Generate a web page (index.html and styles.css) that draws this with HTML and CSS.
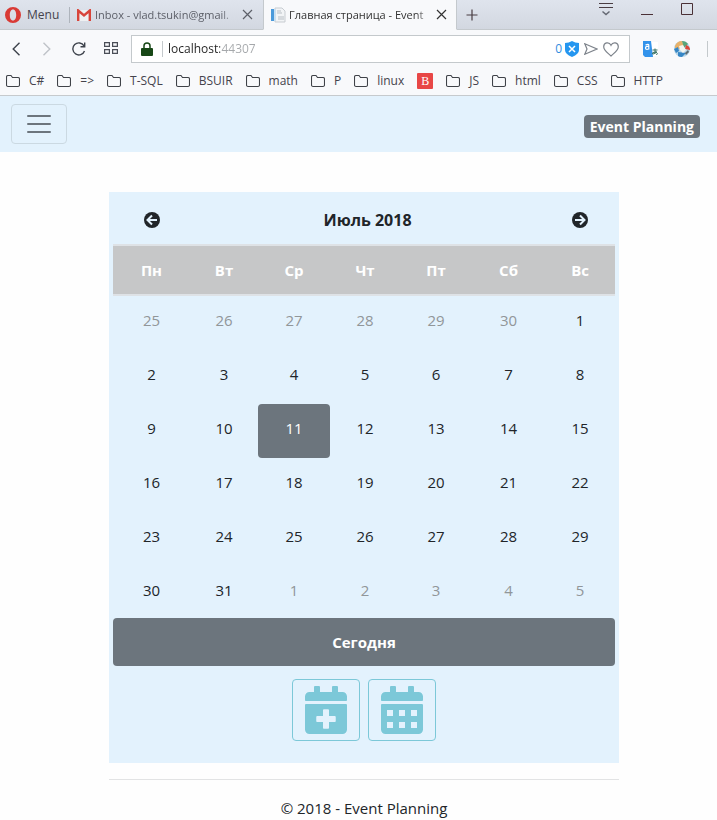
FILE: index.html
```html
<!DOCTYPE html>
<html lang="ru">
<head>
<meta charset="utf-8">
<meta name="viewport" content="width=device-width, initial-scale=1">
<title>Главная страница - Event Planning</title>
<link rel="stylesheet" href="styles.css">
</head>
<body>
<svg width="0" height="0" class="defs" aria-hidden="true">
  <symbol id="folder" viewBox="0 0 14 14"><path d="M.5 3Q.5 1.500 2 1.500H5L6.500 3.500H12Q13.500 3.500 13.500 5V11Q13.500 12.500 12 12.500H2Q.5 12.500.5 11Z" fill="none" stroke="#3f4248" stroke-width="1.100"/></symbol>
  <symbol id="cross" viewBox="0 0 11 11"><path d="M1 1L10 10M10 1L1 10" fill="none" stroke="currentColor" stroke-width="1.200"/></symbol>
</svg>

<header class="browser">
  <div class="tabs">
    <button class="menu" type="button">
      <svg width="16" height="16" viewBox="0 0 16 16"><path fill="#d93a35" fill-rule="evenodd" d="M8 0A8 8 0 1 1 8 16A8 8 0 1 1 8 0ZM8 2.500C5.800 2.500 4.800 5 4.800 8S5.800 13.500 8 13.500S11.200 11 11.200 8S10.200 2.500 8 2.500Z"/></svg>
      Menu
    </button>
    <div class="tab">
      <svg width="14" height="12" viewBox="0 0 14 12"><path d="M0 1H14V12H0Z" fill="#eef0f2"/><path d="M1.200 12V1.500L7 6.500L12.800 1.500V12" fill="none" stroke="#d8453b" stroke-width="2.400"/></svg>
      <span class="tab-title">Inbox - vlad.tsukin@gmail.</span>
      <button class="close" type="button" aria-label="Close tab"><svg width="11" height="11"><use href="#cross"/></svg></button>
    </div>
    <div class="tab active">
      <svg width="16" height="16" viewBox="0 0 16 16"><path d="M5 1H12L15 4V15H5Z" fill="#f2f4f6" stroke="#c7ccd1"/><path d="M1 2H4V14H1Z" fill="#4a9adb"/><path d="M4 2H6V14H4Z" fill="#c9dff0"/><path d="M7 4H11M7 6H12M8 10H14M8 12H14" stroke="#b9bfc5"/></svg>
      <span class="tab-title">Главная страница - Event</span>
      <button class="close" type="button" aria-label="Close tab"><svg width="11" height="11"><use href="#cross"/></svg></button>
    </div>
    <button class="new-tab" type="button" aria-label="New tab"><svg width="12" height="12" viewBox="0 0 12 12"><path d="M6 .5V11.500M.5 6H11.500" stroke="#483c42" stroke-width="1.200"/></svg></button>
    <div class="window-buttons">
      <button type="button" aria-label="Tab menu"><svg width="14" height="13" viewBox="0 0 14 13"><path d="M0 .5H14M0 4.500H14" stroke="#4a3d42"/><path d="M3.500 8.500L7 11.500L10.500 8.500" fill="none" stroke="#646872" stroke-width="1.500"/></svg></button>
      <button type="button" aria-label="Minimize"><svg width="12" height="12" viewBox="0 0 12 12"><path d="M0 11.500H12" stroke="#4a3036"/></svg></button>
      <button type="button" aria-label="Maximize"><svg width="12" height="12" viewBox="0 0 12 12"><path d="M.5.5H11.500V11.500H.5Z" fill="none" stroke="#4a3036"/></svg></button>
    </div>
  </div>

  <div class="toolbar">
    <div class="nav-buttons">
      <button type="button" aria-label="Back"><svg width="8" height="14" viewBox="0 0 8 14"><path d="M7.500.7L1.200 7L7.500 13.300" fill="none" stroke="#3e434c" stroke-width="1.400"/></svg></button>
      <button type="button" aria-label="Forward"><svg width="8" height="14" viewBox="0 0 8 14"><path d="M.5.7L6.800 7L.5 13.300" fill="none" stroke="#bfc3c8" stroke-width="1.400"/></svg></button>
      <button type="button" aria-label="Reload"><svg width="14" height="14" viewBox="0 0 14 14"><path d="M12.500 9A6 6 0 1 1 12 3.800M12.700.5V4.700H8.500" fill="none" stroke="#3e434c" stroke-width="1.400"/></svg></button>
      <button type="button" aria-label="Speed dial"><svg width="14" height="12" viewBox="0 0 14 12"><path d="M.6.6H5.400V4.400H.6ZM8.600.6H13.400V4.400H8.600ZM.6 7.600H5.400V11.400H.6ZM8.600 7.600H13.400V11.400H8.600Z" fill="none" stroke="#4a4e57" stroke-width="1.200"/></svg></button>
    </div>
    <div class="address">
      <svg width="12" height="14" viewBox="0 0 12 14"><path d="M3 7V3.800Q3 1 6 1T9 3.800V7" fill="none" stroke="#174716" stroke-width="1.500"/><rect y="6" width="12" height="8" rx="1" fill="#174716"/></svg>
      <input class="url" type="text" value="localhost:44307" aria-label="Address">
      <span class="blocked">0</span>
      <svg width="14" height="16" viewBox="0 0 14 16"><path d="M0 2Q4 2 7 0Q10 2 14 2V9Q14 13 7 16Q0 13 0 9Z" fill="#2496f0"/><path d="M4 5L10 11M10 5L4 11" stroke="#fff" stroke-width="1.500"/></svg>
      <svg width="14" height="12" viewBox="0 0 14 12"><path d="M.8.8L13 6L.8 11.200L3 6Z" fill="none" stroke="#7d838b" stroke-width="1.200"/></svg>
      <svg width="16" height="15" viewBox="0 0 16 15"><path d="M8 14C5 11 .7 8.500.7 4.700C.7.5 6-.8 8 3.300C10-.8 15.300.5 15.300 4.700C15.300 8.500 11 11 8 14Z" fill="none" stroke="#7d838b" stroke-width="1.200"/></svg>
    </div>
    <div class="extensions">
      <button type="button" aria-label="Translate"><svg width="16" height="16" viewBox="0 0 16 16"><path d="M8 1H15V15H8Z" fill="#fff"/><path d="M0 0H8L10 16H2L0 14Z" fill="#3393eb"/><path d="M2.500 4Q6 2.500 5.800 4.500V8Q2.500 9 2.500 7T5.500 5.500" fill="none" stroke="#fff" stroke-width="1.200"/><path d="M9.500 9H14.500M12 7.500V13M13.500 10Q11 14 9.500 13Q8.500 11 13 11Q15.500 12 13.500 14" fill="none" stroke="#397163"/></svg></button>
      <button type="button" aria-label="Globe extension"><svg width="16" height="16" viewBox="0 0 16 16"><circle cx="8" cy="8" r="8" fill="#b6d5e8"/><path d="M1 5Q3 0 8 0L10 5L5 8L1 7Z" fill="#e8b26a"/><path d="M8 0Q12 0 14 3L10 7Z" fill="#58a47a"/><path d="M12 4Q16 5 16 9L11 8Z" fill="#dc4638"/><path d="M0 8L4 6L5 10L2 12ZM4 11L12 12L8 16Q5 16 4 15Z" fill="#3686c5"/><path d="M5 5L9 4L12 9L9 12L6 9Z" fill="#f3f4ef"/><path d="M11 12L14 9L15 11L12 14Z" fill="#5d6c72"/></svg></button>
    </div>
  </div>

  <nav class="bookmarks" aria-label="Bookmarks">
    <a href="#"><svg width="14" height="14"><use href="#folder"/></svg>C#</a>
    <a href="#"><svg width="14" height="14"><use href="#folder"/></svg>=&gt;</a>
    <a href="#"><svg width="14" height="14"><use href="#folder"/></svg>T-SQL</a>
    <a href="#"><svg width="14" height="14"><use href="#folder"/></svg>BSUIR</a>
    <a href="#"><svg width="14" height="14"><use href="#folder"/></svg>math</a>
    <a href="#"><svg width="14" height="14"><use href="#folder"/></svg>P</a>
    <a href="#"><svg width="14" height="14"><use href="#folder"/></svg>linux</a>
    <a class="site" href="#">B</a>
    <a href="#"><svg width="14" height="14"><use href="#folder"/></svg>JS</a>
    <a href="#"><svg width="14" height="14"><use href="#folder"/></svg>html</a>
    <a href="#"><svg width="14" height="14"><use href="#folder"/></svg>CSS</a>
    <a href="#"><svg width="14" height="14"><use href="#folder"/></svg>HTTP</a>
  </nav>
</header>

<nav class="navbar">
  <button class="toggler" type="button" aria-label="Toggle navigation"><svg width="30" height="30" viewBox="0 0 30 30"><path d="M4 7H26M4 15H26M4 23H26" stroke="#6c757d" stroke-width="2" stroke-linecap="round"/></svg></button>
  <a class="brand" href="#">Event Planning</a>
</nav>

<main class="container">
  <section class="card">
    <table class="calendar">
      <colgroup><col class="c77"><col class="c68"><col class="c72"><col class="c70"><col class="c72"><col class="c73"><col class="c70"></colgroup>
      <thead>
        <tr class="month">
          <th><button type="button" aria-label="Предыдущий месяц"><svg width="16" height="16" viewBox="0 0 16 16"><circle cx="8" cy="8" r="8" fill="#212529"/><path d="M13 8H4M8 3.500L3.500 8L8 12.500" fill="none" stroke="#e3f2fd" stroke-width="2"/></svg></button></th>
          <th colspan="5">Июль 2018</th>
          <th><button type="button" aria-label="Следующий месяц"><svg width="16" height="16" viewBox="0 0 16 16"><circle cx="8" cy="8" r="8" fill="#212529"/><path d="M3 8H12M8 3.500L12.500 8L8 12.500" fill="none" stroke="#e3f2fd" stroke-width="2"/></svg></button></th>
        </tr>
        <tr class="weekdays"><th>Пн</th><th>Вт</th><th>Ср</th><th>Чт</th><th>Пт</th><th>Сб</th><th>Вс</th></tr>
      </thead>
      <tbody>
        <tr><td class="other">25</td><td class="other">26</td><td class="other">27</td><td class="other">28</td><td class="other">29</td><td class="other">30</td><td>1</td></tr>
        <tr><td>2</td><td>3</td><td>4</td><td>5</td><td>6</td><td>7</td><td>8</td></tr>
        <tr><td>9</td><td>10</td><td class="selected">11</td><td>12</td><td>13</td><td>14</td><td>15</td></tr>
        <tr><td>16</td><td>17</td><td>18</td><td>19</td><td>20</td><td>21</td><td>22</td></tr>
        <tr><td>23</td><td>24</td><td>25</td><td>26</td><td>27</td><td>28</td><td>29</td></tr>
        <tr><td>30</td><td>31</td><td class="other">1</td><td class="other">2</td><td class="other">3</td><td class="other">4</td><td class="other">5</td></tr>
      </tbody>
    </table>
    <button class="today" type="button">Сегодня</button>
    <div class="actions">
      <button type="button" aria-label="Добавить событие"><svg width="42" height="48" viewBox="0 0 448 512"><path fill="#7cc8d8" d="M436 160H12c-6.600 0-12-5.400-12-12v-36c0-26.500 21.500-48 48-48h48V12c0-6.600 5.400-12 12-12h40c6.600 0 12 5.400 12 12v52h128V12c0-6.600 5.400-12 12-12h40c6.600 0 12 5.400 12 12v52h48c26.500 0 48 21.500 48 48v36c0 6.600-5.400 12-12 12zM12 192h424c6.600 0 12 5.400 12 12v260c0 26.500-21.500 48-48 48H48c-26.500 0-48-21.500-48-48V204c0-6.600 5.400-12 12-12zm316 140c0-6.600-5.400-12-12-12h-60v-60c0-6.600-5.400-12-12-12h-40c-6.600 0-12 5.400-12 12v60h-60c-6.600 0-12 5.400-12 12v40c0 6.600 5.400 12 12 12h60v60c0 6.600 5.400 12 12 12h40c6.600 0 12-5.400 12-12v-60h60c6.600 0 12-5.400 12-12v-40z"/></svg></button>
      <button type="button" aria-label="Все события"><svg width="42" height="48" viewBox="0 0 448 512"><path fill="#7cc8d8" fill-rule="evenodd" d="M436 160H12c-6.600 0-12-5.400-12-12v-36c0-26.500 21.500-48 48-48h48V12c0-6.600 5.400-12 12-12h40c6.600 0 12 5.400 12 12v52h128V12c0-6.600 5.400-12 12-12h40c6.600 0 12 5.400 12 12v52h48c26.500 0 48 21.500 48 48v36c0 6.600-5.400 12-12 12zM12 192h424c6.600 0 12 5.400 12 12v260c0 26.500-21.500 48-48 48H48c-26.500 0-48-21.500-48-48V204c0-6.600 5.400-12 12-12zM64 256V320H128V256ZM192 256V320H256V256ZM320 256V320H384V256ZM64 384V448H128V384ZM192 384V448H256V384ZM320 384V448H384V384Z"/></svg></button>
    </div>
  </section>
  <footer class="footer">© 2018 - Event Planning</footer>
</main>
</body>
</html>
```
FILE: styles.css
```css
* {
  box-sizing: border-box;
}

body {
  margin: 0;
  background: #fefefe;
  color: #212529;
  font-family: "Open Sans", "Noto Sans", sans-serif;
  font-size: 15px;
  line-height: 24px;
}

button {
  margin: 0;
  padding: 0;
  border: 0;
  background: none;
  color: inherit;
  font: inherit;
}

svg {
  display: block;
  flex: none;
}

a {
  color: inherit;
  text-decoration: none;
}

.defs {
  position: absolute;
}

/* Browser window */
.browser {
  background: #f8f9fb;
  border-bottom: 1px solid #c6cacd;
  color: #45434c;
  font-size: 12px;
  line-height: 18px;
}

.tabs {
  display: flex;
  height: 30px;
  background: linear-gradient(#dfe4ed, #d2d7e0);
}

.tabs > * {
  border-bottom: 1px solid #c4c9cd;
}

.menu {
  display: flex;
  align-items: center;
  gap: 6px;
  width: 69px;
  padding-left: 5px;
}

.tab {
  display: flex;
  align-items: center;
  gap: 4px;
  width: 194px;
  padding: 0 10px 0 8px;
  color: #5d6069;
  font-size: 11px;
}

.tab::before {
  content: "";
  width: 1px;
  height: 16px;
  margin: 0 3px 0 -8px;
  background: #aeb4bc;
}

.tab.active {
  gap: 3px;
  padding: 0 9px 0 6px;
  border-bottom-color: #f8f9fb;
  border-left: 1px solid #c4c9cd;
  border-right: 1px solid #c4c9cd;
  background: #f8f9fb;
  color: #333;
}

.tab.active::before {
  display: none;
}

.tab-title {
  flex: 1;
  min-width: 0;
  overflow: hidden;
  white-space: nowrap;
  mask-image: linear-gradient(to right, #000 88%, transparent);
}

.new-tab {
  padding: 0 9px;
}

.window-buttons {
  display: flex;
  flex: 1;
  justify-content: flex-end;
  align-items: flex-start;
  gap: 28px;
  padding: 3px 24px 0 0;
}

.toolbar {
  display: flex;
  align-items: center;
  padding-top: 5px;
}

.nav-buttons {
  display: flex;
  width: 131px;
}

.nav-buttons button {
  display: flex;
  justify-content: center;
  width: 31px;
}

.nav-buttons button + button {
  width: 32px;
}

.address {
  display: flex;
  flex: 1;
  align-items: center;
  gap: 5px;
  height: 28px;
  padding: 0 10px 0 9px;
  border: 1px solid #c4c9cc;
  background: #fff;
}

.url {
  flex: 1;
  min-width: 0;
  height: 16px;
  margin-left: 4px;
  padding: 0 0 0 5px;
  border: 0;
  border-left: 1px solid #c4c9cc;
  outline: 0;
  background: linear-gradient(to right, #222 57px, #a5a8ab 57px);
  background-clip: text;
  color: transparent;
  font: inherit;
}

.blocked {
  margin-right: -2px;
  color: #2f8de0;
}

.extensions {
  display: flex;
  align-items: center;
  gap: 15px;
  height: 16px;
  margin-right: 9px;
  padding: 0 17px 0 13px;
  border-right: 1px solid #c4c9cc;
}

.bookmarks {
  display: flex;
  align-items: center;
  gap: 13px;
  height: 32px;
  padding: 4px 6px 0;
}

.bookmarks a {
  display: flex;
  align-items: center;
  gap: 9px;
}

.bookmarks .site {
  justify-content: center;
  width: 16px;
  height: 16px;
  border-radius: 1px;
  background: #e84746;
  color: #fff;
  font-family: "Liberation Serif", serif;
}

/* Page */
.navbar {
  display: flex;
  justify-content: space-between;
  align-items: center;
  padding: 8px 17px 8px 11px;
  background: #e3f2fd;
}

.toggler {
  padding: 4px 12px;
  border: 1px solid #cbd9e2;
  border-radius: 4px;
}

.brand {
  margin-top: 5px;
  padding: 4px 6px;
  border-radius: 4px;
  background: #6c757d;
  color: #fff;
  font-size: 14px;
  font-weight: 700;
  line-height: 15px;
}

.container {
  max-width: 521px;
  margin: 40px auto 0;
  padding-left: 11px;
}

.card {
  padding: 0 4px 22px;
  background: #e3f2fd;
}

.calendar {
  width: 100%;
  table-layout: fixed;
  border-spacing: 0;
  text-align: center;
}

.c77 { width: 77px; }
.c68 { width: 68px; }
.c70 { width: 70px; }
.c72 { width: 72px; }
.c73 { width: 73px; }

.calendar th,
.calendar td {
  height: 54px;
  padding: 12px 0 18px;
}

.calendar .month th {
  height: 52px;
  padding: 16px 0 12px;
  font-size: 16px;
}

.month button {
  display: block;
  margin: 0 auto;
}

.calendar .weekdays th {
  height: 52px;
  padding: 12px 0;
  border-top: 2px solid #dee2e6;
  border-bottom: 2px solid #dee2e6;
  background: #c6c7c8;
  color: #fff;
}

.calendar tr:last-child td {
  height: 52px;
  padding-bottom: 16px;
}

.calendar .other {
  color: #919699;
}

.calendar .selected {
  border-radius: 4px;
  background: #6c757d;
  color: #fff;
}

.today {
  display: block;
  width: 100%;
  padding: 12px 0;
  border-radius: 4px;
  background: #6c757d;
  color: #fff;
  font-weight: 700;
}

.actions {
  display: flex;
  justify-content: center;
  gap: 8px;
  margin-top: 13px;
}

.actions button {
  padding: 6px 12px;
  border: 1px solid #7cc8d8;
  border-radius: 4px;
}

.footer {
  margin-top: 16px;
  padding-top: 16px;
  border-top: 1px solid #e2e3e4;
  text-align: center;
}
```
